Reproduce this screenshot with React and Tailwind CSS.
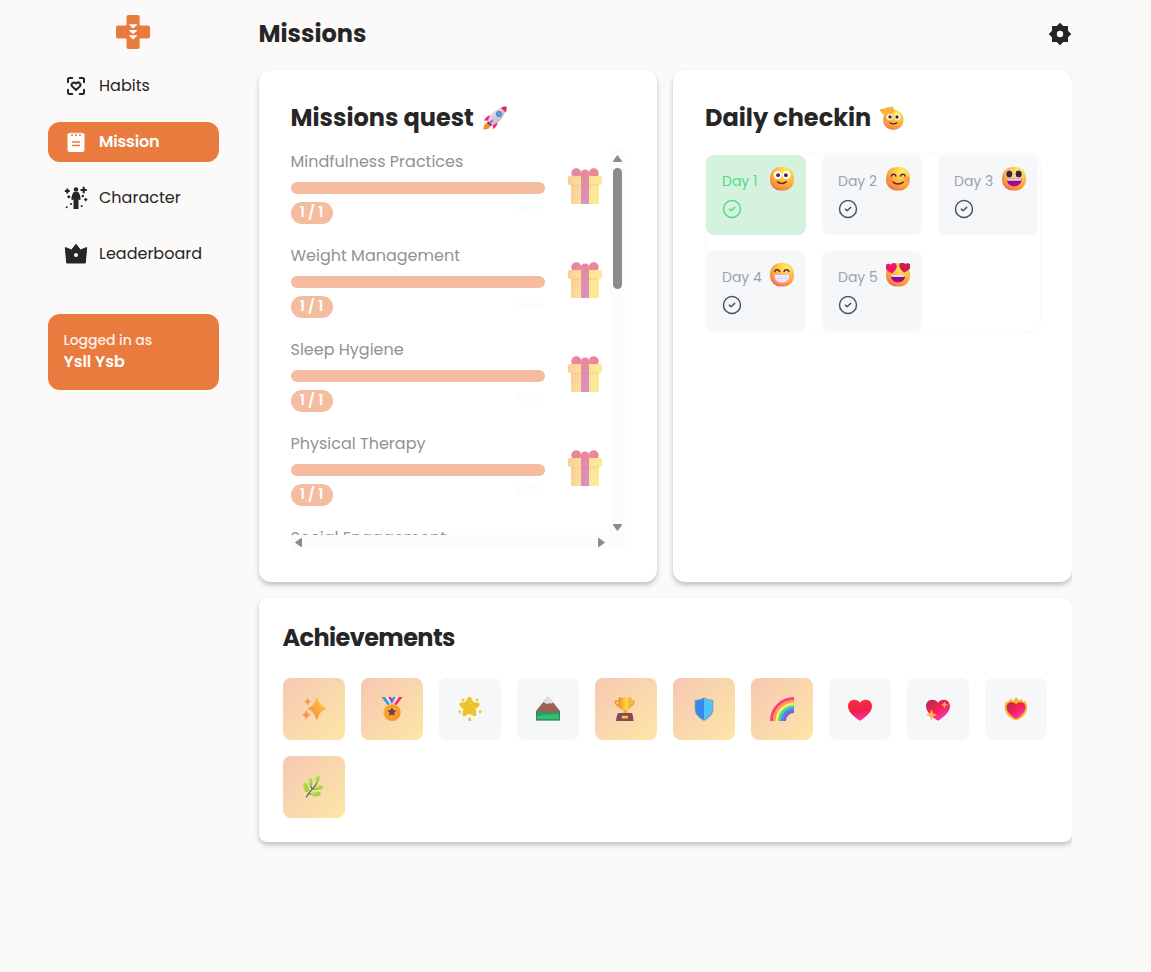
const navItems = [
  { label: "Habits", icon: "habits" },
  { label: "Mission", icon: "mission", active: true },
  { label: "Character", icon: "character" },
  { label: "Leaderboard", icon: "crown" },
];

const missions = [
  "Mindfulness Practices",
  "Weight Management",
  "Sleep Hygiene",
  "Physical Therapy",
  "Social Engagement",
];

const days = [
  { label: "Day 1", face: "smile", done: true },
  { label: "Day 2", face: "blush" },
  { label: "Day 3", face: "laugh" },
  { label: "Day 4", face: "beam" },
  { label: "Day 5", face: "hearts" },
];

const achievements = [
  { name: "sparkles", unlocked: true },
  { name: "medal", unlocked: true },
  { name: "star" },
  { name: "mountain" },
  { name: "trophy", unlocked: true },
  { name: "shield", unlocked: true },
  { name: "rainbow", unlocked: true },
  { name: "heart" },
  { name: "sparkHeart" },
  { name: "fireHeart" },
  { name: "herb", unlocked: true },
];

const HEART = "M12 22C9.5 20.6 0 14.6 0 7.6 0 3.900 2.700 1.100 6 1.100c2.700 0 4.900 1 6 3 1.100-2 3.300-3 6-3 3.300 0 6 2.800 6 6.500C24 14.600 14.500 20.600 12 22z";

const STAR = "M12 1.500l3.300 6.200 7 1.300-4.900 5.100.9 7L12 18l-6.300 3.100.9-7L1.700 9l7-1.300z";

// Gradients shared by every emoji on the page
const Gradients = () => (
  <svg className="absolute w-0 h-0" aria-hidden="true">
    <defs>
      <radialGradient id="face" cx="0.68" cy="0.2" r="0.9">
        <stop offset="0" stopColor="#fff062" />
        <stop offset="0.5" stopColor="#ffb83d" />
        <stop offset="0.82" stopColor="#fb9038" />
        <stop offset="1" stopColor="#e8596c" />
      </radialGradient>
      <linearGradient id="mouth" x1="0" y1="0" x2="0" y2="1">
        <stop offset="0" stopColor="#6d1070" />
        <stop offset="1" stopColor="#c800a8" />
      </linearGradient>
      <linearGradient id="gold" x1="0" y1="0" x2="1" y2="1">
        <stop offset="0" stopColor="#ffc83c" />
        <stop offset="1" stopColor="#f08c2c" />
      </linearGradient>
      <linearGradient id="spark" x1="1" y1="0" x2="0" y2="1">
        <stop offset="0" stopColor="#ffc93a" />
        <stop offset="1" stopColor="#fb8648" />
      </linearGradient>
      <linearGradient id="cup" x1="0" y1="0" x2="1" y2="0">
        <stop offset="0" stopColor="#e9902a" />
        <stop offset="0.6" stopColor="#ffd84a" />
        <stop offset="1" stopColor="#f2a52e" />
      </linearGradient>
      <linearGradient id="heart" x1="0.4" y1="0" x2="0.6" y2="1">
        <stop offset="0" stopColor="#f8313f" />
        <stop offset="0.5" stopColor="#ee2048" />
        <stop offset="1" stopColor="#ff2fa8" />
      </linearGradient>
      <linearGradient id="darkHeart" x1="0" y1="0.2" x2="0.6" y2="1">
        <stop offset="0" stopColor="#bd2b50" />
        <stop offset="0.45" stopColor="#f62050" />
        <stop offset="1" stopColor="#f535b0" />
      </linearGradient>
      <linearGradient id="box" x1="0" y1="0" x2="1" y2="0.2">
        <stop offset="0" stopColor="#f6a040" />
        <stop offset="0.5" stopColor="#fbc94b" />
        <stop offset="1" stopColor="#fbd93e" />
      </linearGradient>
      <linearGradient id="ribbon" x1="0" y1="0" x2="0" y2="1">
        <stop offset="0" stopColor="#dc2645" />
        <stop offset="1" stopColor="#b93a92" />
      </linearGradient>
      <linearGradient id="leaf" x1="0" y1="0" x2="1" y2="1">
        <stop offset="0" stopColor="#c4f052" />
        <stop offset="1" stopColor="#85c52f" />
      </linearGradient>
      <linearGradient id="rocket" x1="0" y1="0" x2="1" y2="1">
        <stop offset="0" stopColor="#f3eaf6" />
        <stop offset="1" stopColor="#b9a5c6" />
      </linearGradient>
    </defs>
  </svg>
);

const Svg = ({ children, className = "size-6" }) => (
  <svg viewBox="0 0 24 24" className={`${className} shrink-0`} fill="none">{children}</svg>
);

const Logo = () => (
  <svg viewBox="0 0 34 34" className="w-[34px] h-[34px]">
    <rect x="10.500" width="13.200" height="34" rx="2" fill="#e97b3f" />
    <rect y="10.500" width="34" height="13" rx="2" fill="#e97b3f" />
    <path d="M13.300 9.200H21v.8l-3.850 3.400-3.850-3.400zM13.300 15H21v.8l-3.850 3.200-3.850-3.200zM13.300 20.200H21v.9l-3.850 3.400-3.850-3.400z" fill="#fff" />
  </svg>
);

const NavIcon = ({ name }) => {
  if (name === "habits") {
    return (
      <Svg>
        <path d="M4 8.300V5.500C4 4.700 4.700 4 5.500 4h2.800M15.700 4h2.800c.8 0 1.500.7 1.500 1.500v2.800M20 15.700v2.800c0 .8-.7 1.500-1.500 1.500h-2.800M8.300 20H5.500C4.700 20 4 19.300 4 18.500v-2.800" stroke="#262626" strokeWidth="2" strokeLinecap="round" />
        <path d="M12 16l-3.700-3.500a2.300 2.300 0 0 1 3.300-3.300l.4.400.4-.4a2.300 2.300 0 0 1 3.300 3.300z" stroke="#262626" strokeWidth="2" strokeLinejoin="round" />
      </Svg>
    );
  }
  if (name === "mission") {
    return (
      <Svg>
        <path d="M5.500 3H7v2.200a1 1 0 0 0 2 0V3h2v2.200a1 1 0 0 0 2 0V3h2v2.200a1 1 0 0 0 2 0V3h1.500C19.700 3 20.500 3.800 20.500 5v15c0 1.200-.8 2-2 2h-13c-1.200 0-2-.8-2-2V5c0-1.200.8-2 2-2z" fill="#fff" />
        <path d="M8 2v3M12 2v3M16 2v3" stroke="#fff" strokeWidth="1" />
        <path d="M8 12h8M8 15.500h8" stroke="#e97b3f" strokeWidth="1.500" />
      </Svg>
    );
  }
  if (name === "character") {
    return (
      <Svg>
        <circle cx="12" cy="3.500" r="2.300" fill="#262626" />
        <path d="M9.800 6h4.400c1.300 1.200 2.300 4 2.500 7.500l-1.700.8-.5-2.100V23h-5V12.200L9 14.300l-1.700-.8C7.500 10 8.500 7.200 9.800 6z" fill="#262626" />
        <path d="M3.300 2.500v5M.8 5h5M19.700.800v6.400M16.500 4h6.400" stroke="#262626" strokeWidth="2.100" />
        <path d="M21.700 11.900v3.400M20 13.600h3.400" stroke="#262626" strokeWidth="1.400" />
        <circle cx="4.800" cy="10.800" r="1.500" fill="#262626" />
        <circle cx="18.800" cy="10" r="1.200" fill="#262626" />
        <circle cx="7" cy="18" r="1.100" fill="#262626" />
        <circle cx="17.700" cy="20" r="1" fill="#262626" />
        <circle cx="2.700" cy="21.200" r="1" fill="#262626" />
      </Svg>
    );
  }
  return (
    <Svg>
      <path d="M1.300 5.500l6.200 2.500L12 2.300 16.500 8l6.200-2.500L21.300 21H2.700z" fill="#262626" stroke="#262626" strokeWidth="1" strokeLinejoin="round" />
      <circle cx="12" cy="13" r="2" fill="#fcfaf8" />
    </Svg>
  );
};

const Face = ({ name }) => (
  <Svg>
    <rect width="24" height="23.500" rx="10.500" fill="url(#face)" />
    {name === "smile" && (
      <>
        <circle cx="7.600" cy="8" r="3.900" fill="#fff" />
        <circle cx="16.400" cy="8" r="3.900" fill="#fff" />
        <circle cx="8.100" cy="8.200" r="1.900" fill="#4a2440" />
        <circle cx="15.900" cy="8.200" r="1.900" fill="#4a2440" />
        <path d="M7.500 14.800c2 2.200 6.700 2.200 8.700 0" stroke="#55263d" strokeWidth="1.500" strokeLinecap="round" />
      </>
    )}
    {name === "blush" && (
      <>
        <circle cx="4" cy="12.500" r="3" fill="#ff7851" opacity=".45" />
        <circle cx="20.500" cy="12.500" r="3" fill="#ff7851" opacity=".45" />
        <path d="M5.300 9c.8-2.400 3.800-2.400 4.600 0M14.500 9c.8-2.400 3.800-2.400 4.600 0M7 15c2.500 2.700 7.600 2.700 10.200 0" stroke="#55263d" strokeWidth="1.500" strokeLinecap="round" />
      </>
    )}
    {name === "laugh" && (
      <>
        <ellipse cx="7.300" cy="7" rx="3.700" ry="4" fill="#fff" />
        <ellipse cx="16.700" cy="7" rx="3.700" ry="4" fill="#fff" />
        <ellipse cx="7.300" cy="7" rx="3.100" ry="3.500" fill="#3d2338" />
        <ellipse cx="16.700" cy="7" rx="3.100" ry="3.500" fill="#3d2338" />
        <path d="M4.800 11.500h14.800c.3 4.800-3 8-7.400 8s-7.700-3.200-7.400-8z" fill="url(#mouth)" />
        <path d="M5 11.500h14.400v1.300c0 .6-.5 1-1 1H6c-.6 0-1-.4-1-1z" fill="#e9d3f2" />
      </>
    )}
    {name === "beam" && (
      <>
        <path d="M4.800 8.500c.8-2.400 4-2.400 4.800 0M14 8.500c.8-2.400 4-2.400 4.800 0" stroke="#55263d" strokeWidth="1.500" strokeLinecap="round" />
        <path d="M4.500 11.500h15c.6 5.200-2.500 8.300-7.500 8.300s-8.100-3.100-7.500-8.300z" fill="#f5eafb" stroke="#d59be2" strokeWidth=".7" />
        <path d="M5 15.500h14M8.500 12v7M12 12v7.500M15.500 12v7" stroke="#e3c5f0" strokeWidth=".6" />
      </>
    )}
    {name === "hearts" && (
      <>
        <path d={HEART} transform="translate(-.5 0) rotate(-8 5 5) scale(.48)" fill="#ed176b" />
        <path d={HEART} transform="translate(13 -.9) rotate(8 5 5) scale(.48)" fill="#ce1d55" />
        <path d="M4.800 12h14.400c.2 4.600-3 7.500-7.200 7.500S4.600 16.600 4.800 12z" fill="url(#mouth)" />
        <path d="M5 12h14v1c0 .5-.4.900-1 .900H6c-.6 0-1-.4-1-.9z" fill="#e9d3f2" />
      </>
    )}
  </Svg>
);

const Salute = () => (
  <Svg>
    <circle cx="13.300" cy="13.700" r="10.300" fill="url(#face)" />
    <circle cx="9.600" cy="10.900" r="2.900" fill="#fff" />
    <circle cx="17.300" cy="10.900" r="2.900" fill="#fff" />
    <circle cx="10" cy="11" r="1.700" fill="#4a2440" />
    <circle cx="17" cy="11" r="1.700" fill="#4a2440" />
    <path d="M10 16.700c1.800 1.500 5 1.500 6.800 0" stroke="#55263d" strokeWidth="1.200" strokeLinecap="round" />
    <path d="M.3 3.600C3 2.900 6 2.700 8.500 1.300c.8-.4 1.500.1 1.500.9l1.300-1.300c.8-.6 1.700-.1 1.700.8l1 2.100c.7 1.700-.6 2.600-2.400 3L6 8.300c-2 .4-3.700-.6-4.600-2C.7 5.300 0 4.300.3 3.600z" fill="#fbb233" stroke="#ef9b2a" strokeWidth=".4" />
  </Svg>
);

const Rocket = () => (
  <Svg>
    <path d="M4 17c-2.600.5-3.600 3.400-3.700 6.500C3.500 23.700 7 22.500 7 20z" fill="#f98d2b" />
    <path d="M8.200 9.500c-3.300-.3-5.800 1.600-7.400 5.500 2-.8 3.600-.5 5.200.5zM14.500 15.800c.3 3.300-1.500 5.700-4.700 7.400.5-2 .2-3.700-1-5.200z" fill="#f3267a" />
    <path d="M4.500 16C6 9 12 2.500 21 1.500c.9 0 1.500.6 1.500 1.500C21.500 12 15 18 8 19.500z" fill="url(#rocket)" />
    <path d="M17.800 1.800c1.700-.9 3.200-1.300 4.700-1.300 1 0 1.300.4 1.200 1.400-.1 1.600-.5 3.200-1.100 4.600z" fill="#e8274b" />
    <path d="M3.700 16.700l3.800 3.800 1.300-1.800-3.300-3.300z" fill="#573b78" />
    <path d="M11 13L5.500 20.500l2-5.500z" fill="#f3267a" />
    <circle cx="16" cy="8" r="2.900" fill="#5874ae" />
    <circle cx="16" cy="8" r="2" fill="#3da9f7" />
  </Svg>
);

const Gift = () => (
  <svg viewBox="0 0 36 36" className="size-9 shrink-0 opacity-55">
    <circle cx="9.300" cy="5.200" r="5" fill="#dc2645" />
    <circle cx="26.700" cy="5.200" r="5" fill="#dc2645" />
    <rect x="4" y="14" width="28" height="22" rx="1.500" fill="url(#box)" />
    <rect x="1" y="8" width="34" height="9" rx="1.800" fill="url(#box)" />
    <path d="M4 17h28" stroke="#e99535" strokeWidth=".8" />
    <path d="M14 5.500a4 4 0 0 1 8 0V36h-8z" fill="url(#ribbon)" />
  </svg>
);

const Badge = ({ name }) => {
  switch (name) {
    case "sparkles":
      return (
        <Svg>
          <path d="M15 1.200c1.400 4.700 3.600 8 9 10.300-5.400 2.300-7.700 6-9.200 10.800-1.500-4.800-3.700-8.300-8.800-10.800 5.100-2.300 7.500-5.600 9-10.300z" fill="url(#spark)" stroke="url(#spark)" strokeWidth="1" strokeLinejoin="round" />
          <path d="M5.600 1.200c.6 2 1.200 2.800 3.200 3.500-2 .7-2.600 1.500-3.200 3.500C5 6.200 4.400 5.400 2.400 4.700c2-.7 2.600-1.500 3.200-3.500zM4.300 13c.6 2.600 1.600 3.900 4.200 4.800-2.600.9-3.600 2.100-4.200 4.700-.6-2.600-1.600-3.800-4.200-4.700 2.600-.9 3.600-2.200 4.200-4.800z" fill="#fb944c" stroke="#fb944c" strokeWidth=".5" />
        </Svg>
      );
    case "medal":
      return (
        <Svg>
          <path d="M1.500 0h3.800l6.500 8H7.500z" fill="#3898ee" />
          <path d="M5.300 0h3l5 7.500h-3z" fill="#f4e6fa" />
          <path d="M8.300 0h2.400l3 4.500-1.700 2.200z" fill="#ed2556" />
          <path d="M22.500 0h-3.800l-6.500 8h4.300z" fill="#f92f60" />
          <path d="M18.700 0h-3l-5 7.500h3z" fill="#f4e6fa" />
          <path d="M15.700 0h-2.400l-3 4.500L12 7z" fill="#4088df" />
          <circle cx="12" cy="15.300" r="8.700" fill="url(#gold)" />
          <circle cx="12" cy="15.300" r="6.500" fill="#f9a234" stroke="#e88828" strokeWidth=".7" />
          <path d={STAR} transform="translate(7.500 10.500) scale(.37)" fill="#743a54" stroke="#743a54" strokeWidth="2" />
        </Svg>
      );
    case "star":
      return (
        <Svg>
          <path d={STAR} transform="translate(1.500 0) scale(.83)" fill="#ebc427" stroke="#ebc427" strokeWidth="4" strokeLinejoin="round" />
          <path d="M12 5l2 4.500 4 1-3 3 .7 4" stroke="#f3d23a" strokeWidth="1" />
          <path d="M4 1l3 2-2.300 1.800C3.400 3.900 3.500 2.200 4 1zM20 1l-3 2 2.300 1.800C20.600 3.900 20.500 2.200 20 1zM.5 13l3.200 1.300-1.500 2.400C.7 16.300.2 14.500.5 13zM23.500 13l-3.200 1.300 1.500 2.400c1.500-.4 2-2.200 1.700-3.700zM11.700 20c1.500 1.300 2 2.300 1.300 4h-2.600c-.7-1.700-.2-2.700 1.300-4z" fill="#f0c62d" />
        </Svg>
      );
    case "mountain":
      return (
        <Svg>
          <path d="M0 14L9.500 2.200C11 0 13 0 14.500 2.200L24 14v7H0z" fill="#9a6355" />
          <path d="M7.200 5.200l2.600-3.300c1.300-1.900 3.300-1.900 4.600 0l2.700 3.500-2.200 1.300-1.700-.7-2 1.300-2-1.400z" fill="#e5dfe9" />
          <path d="M0 14.500c4-1.800 7 .4 12 1.500 5 .5 8-1.200 12-1.500v9H0z" fill="#299c62" />
          <path d="M0 19c7 0 11-2.500 24-1.500V23H0z" fill="#2bc46d" />
          <path d="M.5 14.500v8.300h23v-8.300" stroke="#48765d" strokeWidth="1" />
        </Svg>
      );
    case "trophy":
      return (
        <Svg>
          <path d="M5 4H2.500C.5 4 1 8 5.500 9M18 4h.500c2 0 1.500 4-2 5" stroke="#e99b32" strokeWidth="1.700" />
          <path d="M4.500.5h13v7c0 3.500-3 6-6.500 6s-6.500-2.500-6.500-6z" fill="url(#cup)" />
          <path d="M9.700 13h3l.7 4H9z" fill="#f4ad32" />
          <path d="M4 16h14c1 2 1.200 5 1.500 8H2c.3-3 .8-6 2-8z" fill="#86495b" />
          <rect x="7.800" y="18.800" width="6.200" height="2.700" fill="#f8c33c" />
        </Svg>
      );
    case "shield":
      return (
        <Svg>
          <path d="M12 .5c2.500 2 5.500 2.700 9 2.800v9C21 17 17 21 12 23.500 7 21 3 17 3 12.300v-9c3.500-.1 6.500-.8 9-2.800z" fill="#3688ea" stroke="#9f9eae" strokeWidth=".8" />
          <path d="M12 1c2.500 1.900 5.500 2.700 8.600 2.800v8.500c0 4.400-3.800 8-8.600 10.500z" fill="#50c3fb" />
        </Svg>
      );
    case "rainbow":
      return (
        <Svg>
          <path d="M1.500 24A22.500 22.500 0 0 1 24 1.500" stroke="#fa3f87" strokeWidth="3" />
          <path d="M4.300 24A19.700 19.700 0 0 1 24 4.300" stroke="#fca13d" strokeWidth="2.800" />
          <path d="M7 24A17 17 0 0 1 24 7" stroke="#fde77a" strokeWidth="2.700" />
          <path d="M9.600 24A14.400 14.400 0 0 1 24 9.600" stroke="#45d990" strokeWidth="2.700" />
          <path d="M12 24A12 12 0 0 1 24 12" stroke="#3e8df2" strokeWidth="2.400" />
          <path d="M14.500 24A9.500 9.500 0 0 1 24 14.500" stroke="#7560da" strokeWidth="2.800" />
        </Svg>
      );
    case "heart":
      return <Svg><path d={HEART} transform="translate(0 1.700)" fill="url(#heart)" /></Svg>;
    case "sparkHeart":
      return (
        <Svg>
          <path d={HEART} transform="translate(0 1.700)" fill="url(#darkHeart)" />
          <path d="M18.500 5c.4 1.800 1 2.400 2.800 2.800-1.800.4-2.400 1-2.800 2.800-.4-1.800-1-2.400-2.800-2.800 1.800-.4 2.400-1 2.800-2.800zM5.500 13c.6 3.200 1.600 4.200 4.800 4.900-3.200.8-4.200 1.800-4.800 5.200-.6-3.400-1.600-4.400-4.800-5.200 3.200-.7 4.200-1.700 4.800-4.900z" fill="#ffb44a" stroke="#ffb44a" strokeWidth=".7" />
        </Svg>
      );
    case "fireHeart":
      return (
        <Svg>
          <path d="M2.500 4.500C.5 7 .3 10.500 1.300 14c1.700 4.500 6 8.500 10.700 9 4.500-.5 9-4.500 10.500-9 1-3.500.8-7-1.500-10L19 5l-1.500-3-2.500 1.500L12 0 9.500 4 6.500 1.500 4 5z" fill="#fdb42c" />
          <path d={HEART} transform="translate(2.600 4.500) scale(.79)" fill="url(#darkHeart)" />
        </Svg>
      );
    default:
      return (
        <Svg>
          <path d="M4.300 22.500C8 14 12.500 14 15 7.500M6.500 19h7M10 14l-2-5M10.500 14h6" stroke="#4a7b48" strokeWidth="1.200" />
          <ellipse cx="3.800" cy="12.500" rx="2.400" ry="5" transform="rotate(-18 3.800 12.500)" fill="url(#leaf)" />
          <ellipse cx="8.500" cy="7" rx="2" ry="4.100" fill="url(#leaf)" />
          <ellipse cx="15.500" cy="4" rx="1.800" ry="4" transform="rotate(15 15.500 4)" fill="url(#leaf)" />
          <ellipse cx="17" cy="12.700" rx="3.800" ry="1.900" transform="rotate(-12 17 12.700)" fill="url(#leaf)" />
          <ellipse cx="14" cy="19" rx="4.800" ry="2.300" transform="rotate(-8 14 19)" fill="url(#leaf)" />
        </Svg>
      );
  }
};

const Sidebar = () => (
  <aside className="w-[171px] shrink-0 flex flex-col">
    <div className="flex justify-center pt-[15px] pr-px h-[66px]"><Logo /></div>
    <nav className="flex flex-col gap-4">
      {navItems.map((item) => (
        <a key={item.label} className={`flex items-center gap-[11px] h-10 px-4 rounded-xl ${item.active ? "bg-[#e97b3f] text-white font-semibold tracking-[-0.15px]" : "text-[#262626]"}`}>
          <NavIcon name={item.icon} />
          <span>{item.label}</span>
        </a>
      ))}
    </nav>
    <div className="mt-10 h-[76px] rounded-xl bg-[#e97b3f] text-white px-[15.5px] pt-4">
      <div className="text-sm leading-5 font-medium text-[#fdeee6] tracking-[-0.05px]">Logged in as</div>
      <div className="leading-6 font-semibold">Ysll Ysb</div>
    </div>
  </aside>
);

const Mission = ({ title }) => (
  <div className="flex h-[94px] shrink-0">
    <div className="w-[254px]">
      <div className="leading-6 text-[#929292]">{title}</div>
      <div className="mt-2 h-3 rounded-full bg-[#f4bd9f]" />
      <div className="mt-2 flex justify-between">
        <span className="w-[42px] h-[22px] rounded-full bg-[#f4bd9f] text-white text-sm leading-[21px] font-semibold text-center">1 / 1</span>
        <span className="text-xs leading-[14px] font-semibold text-[#fbfbfb]">100%</span>
      </div>
    </div>
    <div className="ml-[22.5px] mt-[18px]"><Gift /></div>
  </div>
);

const Arrow = ({ className = "" }) => (
  <svg viewBox="0 0 9 7" className={`w-[9px] h-[7px] ${className}`}>
    <path d="M4.500.5L8.500 6v.5h-8V6z" fill="#8b8b8b" stroke="#8b8b8b" strokeLinejoin="round" />
  </svg>
);

const QuestCard = () => (
  <section className="bg-white rounded-xl shadow-[0_3px_5px_rgba(0,0,0,0.23)] px-8 pt-8">
    <h2 className="flex items-center gap-[9.5px] h-8 text-2xl font-bold">
      <span>Missions quest</span>
      <Rocket />
    </h2>
    <div className="mt-4 w-[334.5px] h-[400px] flex flex-col">
      <div className="flex h-[385px]">
        <div className="flex-1 flex flex-col overflow-hidden">
          {missions.map((title) => <Mission key={title} title={title} />)}
        </div>
        <div className="w-[15px] bg-[#fcfcfc] flex flex-col items-center pt-[5px] pb-1">
          <Arrow />
          <div className="mt-[6px] w-[9px] h-[121px] rounded-full bg-[#8b8b8b]" />
          <Arrow className="mt-auto rotate-180" />
        </div>
      </div>
      <div className="h-[15px] bg-[#fcfcfc] flex items-center justify-between pl-[3.5px] pr-[19px]">
        <Arrow className="-rotate-90" />
        <Arrow className="rotate-90" />
      </div>
    </div>
  </section>
);

const DayTile = ({ day }) => (
  <div className={`w-[100px] h-20 rounded-lg pl-4 pt-3 ${day.done ? "bg-[#d4f2de] text-[#4ade80]" : "bg-[#f6f7f9] text-[#4b5563]"}`}>
    <div className="flex items-center w-[72px] h-6 justify-between">
      <span className={`mt-1 text-sm ${day.done ? "" : "text-[#9ca3af]"}`}>{day.label}</span>
      <Face name={day.face} />
    </div>
    <svg viewBox="0 0 20 20" className="mt-2 size-5" fill="none" stroke="currentColor" strokeWidth="1.500" strokeLinecap="round" strokeLinejoin="round">
      <circle cx="10" cy="10" r="8.500" />
      <path d="M7.300 10.200l1.800 1.500 3.600-3.300" />
    </svg>
  </div>
);

const CheckinCard = () => (
  <section className="bg-white rounded-xl shadow-[0_3px_5px_rgba(0,0,0,0.23)] px-8 pt-8">
    <h2 className="flex items-center gap-[9px] h-8 text-2xl font-bold">
      <span>Daily checkin</span>
      <Salute />
    </h2>
    <div className="mt-[19px] h-[180px] w-[336px] rounded-xl border border-[#f9f9f9] pt-px grid grid-cols-[100px_100px_100px] gap-4 content-start">
      {days.map((day) => <DayTile key={day.label} day={day} />)}
    </div>
  </section>
);

const App = () => (
  <div className="min-h-screen bg-[#fcfaf8] flex gap-6 pl-12 overflow-hidden text-[#262626] text-base [font-family:Poppins,Inter,sans-serif]">
    <Gradients />
    <Sidebar />
    <main className="w-[828.5px] pl-[15.5px] pb-6 overflow-hidden">
      <header className="flex items-center justify-between h-[70px] pb-[3px]">
        <h1 className="text-2xl font-bold">Missions</h1>
        <Svg>
          <path d="M20 8.700V4h-4.700L12 .7 8.700 4H4v4.700L.7 12 4 15.300V20h4.700l3.300 3.300 3.300-3.300H20v-4.700l3.300-3.300z" fill="#262626" />
          <circle cx="12" cy="12" r="3.200" fill="#fcfaf8" />
        </Svg>
      </header>
      <div className="grid grid-cols-2 gap-4 h-[512px]">
        <QuestCard />
        <CheckinCard />
      </div>
      <section className="mt-4 h-[244px] bg-white rounded-lg shadow-[0_3px_5px_rgba(0,0,0,0.23)] px-6 pt-6">
        <h2 className="text-2xl leading-8 font-bold tracking-tight">Achievements</h2>
        <div className="mt-6 grid grid-cols-10 gap-4">
          {achievements.map((item) => (
            <div key={item.name} className={`aspect-square rounded-lg flex items-center justify-center ${item.unlocked ? "bg-linear-to-br from-[#f6c8b3] to-[#fde6a5]" : "bg-[#f6f7f9]"}`}>
              <Badge name={item.name} />
            </div>
          ))}
        </div>
      </section>
    </main>
  </div>
);

export default App;
